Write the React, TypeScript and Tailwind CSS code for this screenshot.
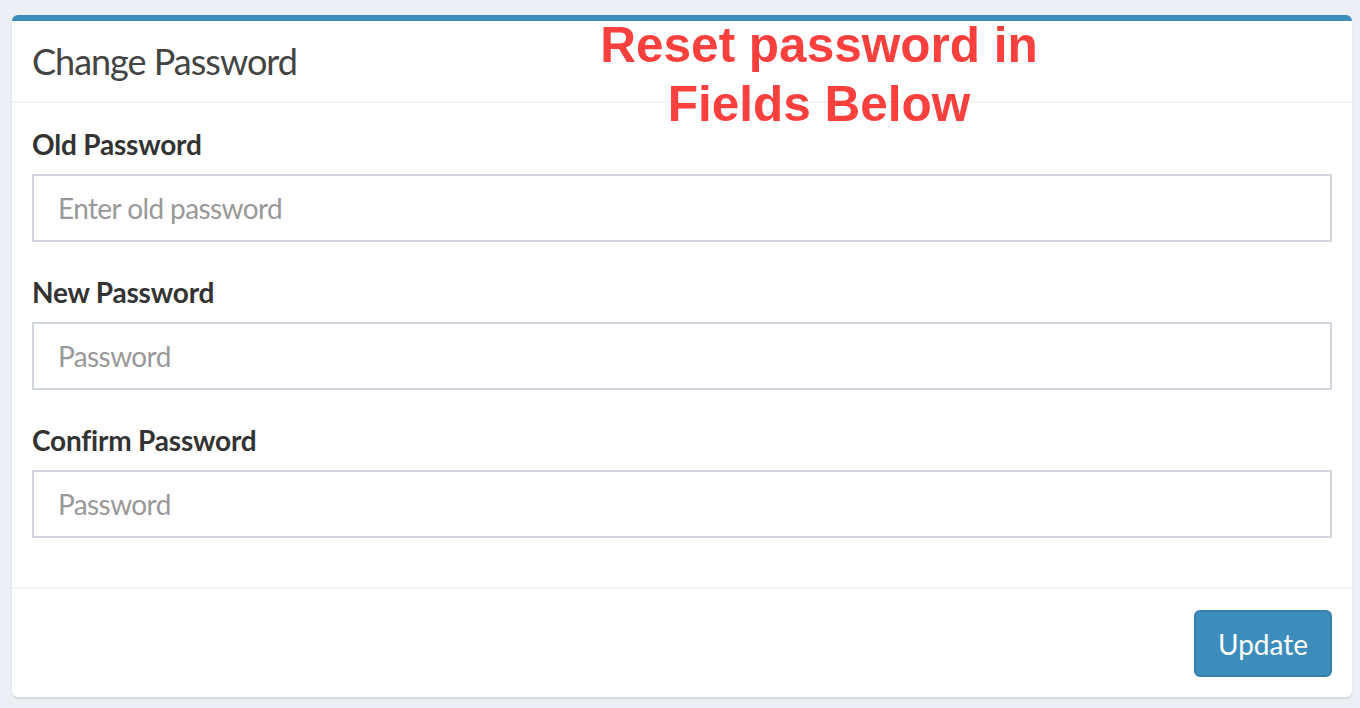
import React from "react";

const font = { fontFamily: "Lato, 'Open Sans', sans-serif" };

function Field({ label, placeholder }: { label: string; placeholder: string }) {
  return (
    <div className="flex flex-col mb-[30px]">
      <label className="text-[28px] leading-[40px] font-bold text-[#333] mb-[10px] tracking-[-0.2px]">{label}</label>
      <input
        type="text"
        placeholder={placeholder}
        className="h-[68px] w-full border-2 border-[#d2d6de] bg-white px-[24px] text-[28px] tracking-[-0.6px] text-[#555] placeholder:text-[#999] outline-none"
        style={font}
      />
    </div>
  );
}

export default function App() {
  return (
    <div className="w-[1360px] h-[708px] bg-[#ecf0f5] pt-[15px] pl-[12px] pr-[8px] overflow-hidden" style={font}>
      <div className="relative bg-white rounded-[6px] border-t-[6px] border-[#3c8dbc] shadow-[0_2px_2px_rgba(0,0,0,0.1)]">
        <div className="h-[82px] flex items-center px-[20px] border-b-2 border-[#f4f4f4]">
          <h3 className="text-[36px] leading-[40px] text-[#444] tracking-[-1px]">Change Password</h3>
        </div>
        <div className="px-[20px] pt-[21px] pb-[19px]">
          <Field label="Old Password" placeholder="Enter old password" />
          <Field label="New Password" placeholder="Password" />
          <Field label="Confirm Password" placeholder="Password" />
        </div>
        <div className="border-t-2 border-[#f4f4f4] pt-[21px] pb-[20px] px-[20px] flex justify-end">
          <button className="w-[138px] h-[67px] bg-[#3c8dbc] border-2 border-[#367fa9] rounded-[6px] text-white text-[28px]">
            Update
          </button>
        </div>
        <div
          className="absolute left-[577px] top-[-6px] w-[460px] text-center font-bold text-[#fc403e] text-[49.5px] leading-[59px]"
          style={{ fontFamily: "'Liberation Sans', Arial, sans-serif" }}
        >
          Reset password in
          <br />
          Fields Below
        </div>
      </div>
    </div>
  );
}
